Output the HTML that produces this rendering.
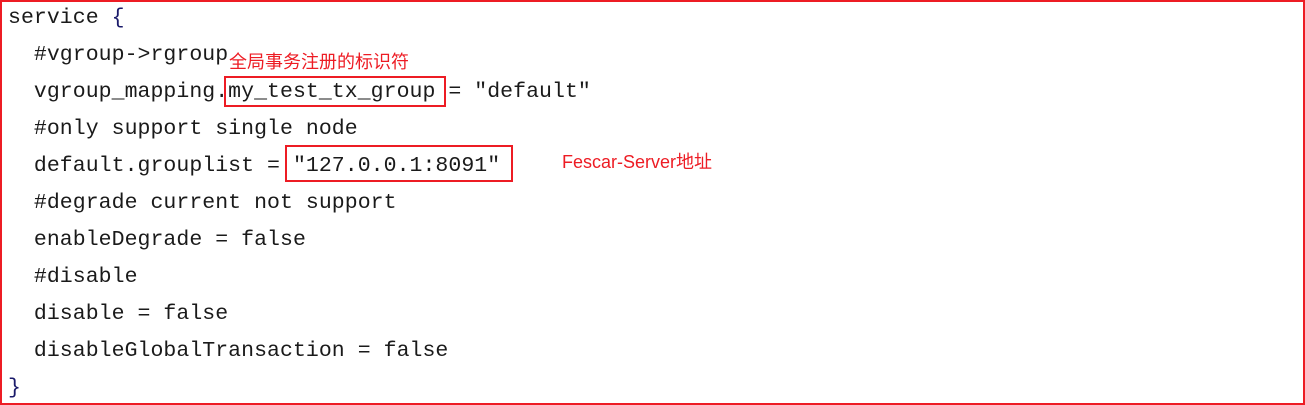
<!DOCTYPE html>
<html><head><meta charset="utf-8"><style>
html,body{margin:0;padding:0;background:#fff}
.wrap{position:relative;width:1305px;height:405px;box-sizing:border-box;border:2px solid #ed1c24;overflow:hidden}
.l{position:absolute;left:6px;font-family:"Liberation Mono","Noto Sans CJK SC",monospace;font-size:21.5px;color:#1a1a1a;white-space:pre;line-height:26px;letter-spacing:0.05px}
.box{position:absolute;border:2px solid #ed1c24}
.a{position:absolute;color:#ed1c24;font-family:"Liberation Sans","Noto Sans CJK SC",sans-serif;font-size:18px;white-space:nowrap;line-height:22px}
</style></head><body><div class="wrap">
<div class="l" style="top:3px">service <span style="color:#1a1a6a">{</span></div>
<div class="l" style="top:40px">  #vgroup->rgroup</div>
<div class="l" style="top:77px">  vgroup_mapping.my_test_tx_group = "default"</div>
<div class="l" style="top:114px">  #only support single node</div>
<div class="l" style="top:151px">  default.grouplist = "127.0.0.1:8091"</div>
<div class="l" style="top:188px">  #degrade current not support</div>
<div class="l" style="top:225px">  enableDegrade = false</div>
<div class="l" style="top:262px">  #disable</div>
<div class="l" style="top:299px">  disable = false</div>
<div class="l" style="top:336px">  disableGlobalTransaction = false</div>
<div class="l" style="top:373px;color:#1a1a6a">}</div>
<div class="box" style="left:222px;top:74px;width:218px;height:27px"></div>
<div class="box" style="left:283px;top:143px;width:224px;height:33px"></div>
<div class="a" style="left:227px;top:49px">全局事务注册的标识符</div>
<div class="a" style="left:560px;top:149px">Fescar-Server地址</div>
</div></body></html>
